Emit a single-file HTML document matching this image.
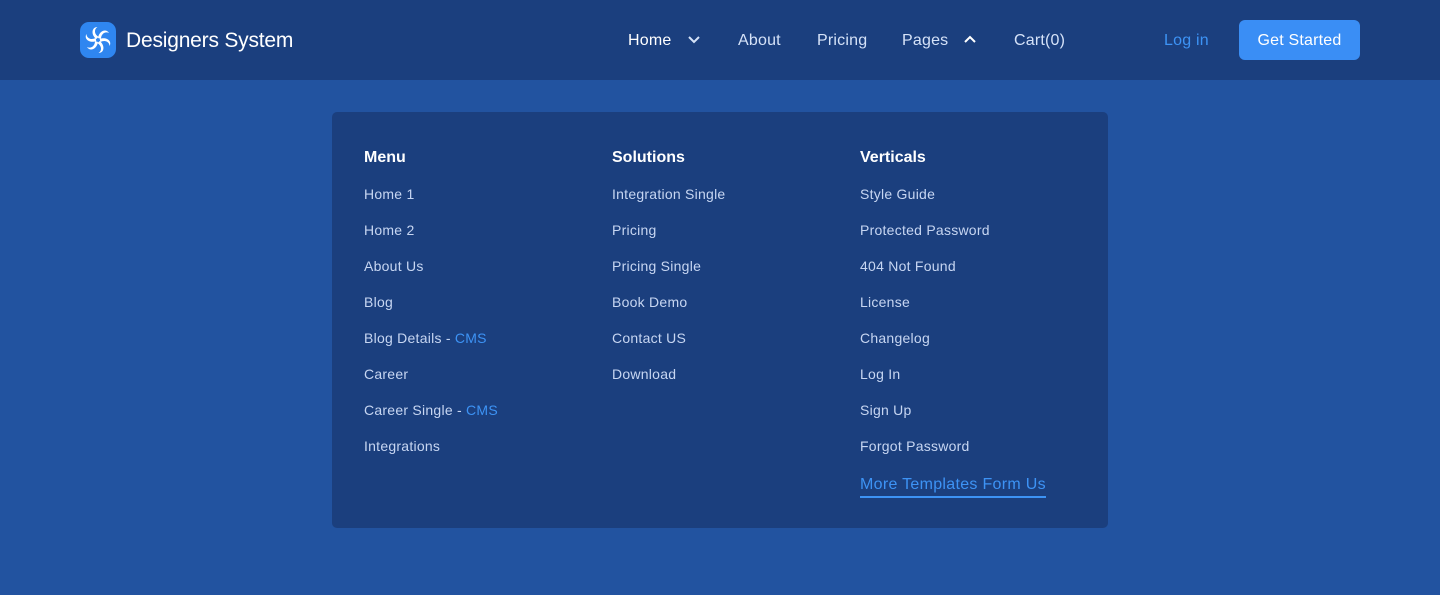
<!DOCTYPE html>
<html><head><meta charset="utf-8"><style>
*{margin:0;padding:0;box-sizing:border-box}
body{width:1440px;height:595px;background:#2253a0;font-family:"Liberation Sans",sans-serif;position:relative;overflow:hidden}
.hdr{position:absolute;left:0;top:0;width:1440px;height:80px;background:#1b3f7e}
.logo{position:absolute;left:80px;top:22px;width:36px;height:36px;border-radius:9px;background:#2f86f0}
.brand{position:absolute;left:126px;top:29px;color:#fff;font-size:21px;letter-spacing:-0.2px}
.nav{position:absolute;top:32px;color:#d5e2f8;font-size:16px;letter-spacing:0.2px}
.btn{position:absolute;left:1239px;top:20px;width:121px;height:40px;border-radius:6px;background:#3a8ef5;color:#fff;font-size:16px;text-align:center;line-height:41px;letter-spacing:0.2px}
.panel{position:absolute;left:332px;top:112px;width:776px;height:416px;background:#1b3f7e;border-radius:5px}
.col{position:absolute;top:38px}
.col h4{color:#fff;font-size:16px;font-weight:bold;margin-bottom:20px;height:16px;line-height:16px}
.col div{color:#c7d6f2;font-size:14px;height:36px;line-height:16px;letter-spacing:0.25px}
.cms{color:#3d93f5}
.more{color:#3d93f5;font-size:16px;border-bottom:2px solid #3d93f5;display:inline-block;padding-bottom:2px;margin-top:2px;letter-spacing:0.3px}
</style></head><body>
<div class="hdr">
<div class="logo"><svg width="36" height="36" viewBox="0 0 36 36"><g fill="#fff" transform="translate(18 18)"><path id="p" d="M0 -2 C1 -9 8 -12 11 -7 C7 -9 3 -6 3 -1 Z"/><use href="#p" transform="rotate(60)"/><use href="#p" transform="rotate(120)"/><use href="#p" transform="rotate(180)"/><use href="#p" transform="rotate(240)"/><use href="#p" transform="rotate(300)"/></g></svg></div>
<div class="brand">Designers System</div>
<div class="nav" style="left:628px;color:#fff">Home</div>
<svg style="position:absolute;left:687px;top:35px" width="14" height="10" viewBox="0 0 14 10"><path d="M2 2l5 5 5-5" stroke="#d5e2f8" stroke-width="2" fill="none"/></svg>
<div class="nav" style="left:738px">About</div>
<div class="nav" style="left:817px">Pricing</div>
<div class="nav" style="left:902px">Pages</div>
<svg style="position:absolute;left:963px;top:35px" width="14" height="10" viewBox="0 0 14 10"><path d="M2 7l5-5 5 5" stroke="#fff" stroke-width="2" fill="none"/></svg>
<div class="nav" style="left:1014px">Cart(0)</div>
<div class="nav" style="left:1164px;color:#3d93f5">Log in</div>
<div class="btn">Get Started</div>
</div>
<div class="panel">
<div class="col" style="left:32px"><h4>Menu</h4><div>Home 1</div><div>Home 2</div><div>About Us</div><div>Blog</div><div>Blog Details - <span class="cms">CMS</span></div><div>Career</div><div>Career Single - <span class="cms">CMS</span></div><div>Integrations</div></div>
<div class="col" style="left:280px"><h4>Solutions</h4><div>Integration Single</div><div>Pricing</div><div>Pricing Single</div><div>Book Demo</div><div>Contact US</div><div>Download</div></div>
<div class="col" style="left:528px"><h4>Verticals</h4><div>Style Guide</div><div>Protected Password</div><div>404 Not Found</div><div>License</div><div>Changelog</div><div>Log In</div><div>Sign Up</div><div>Forgot Password</div><span class="more">More Templates Form Us</span></div>
</div>
</body></html>
